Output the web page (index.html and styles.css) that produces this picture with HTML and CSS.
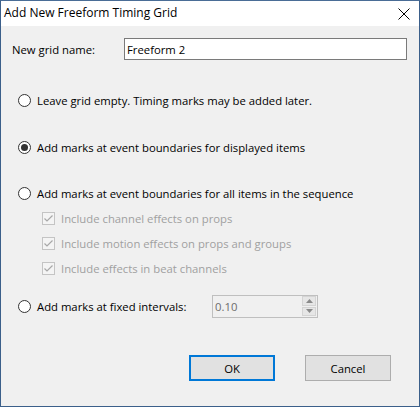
FILE: index.html
```html
<!DOCTYPE html>
<html>
<head>
<meta charset="utf-8">
<link rel="stylesheet" href="styles.css">
</head>
<body>
<div class="dialog">
  <div class="titlebar">
    <span class="title">Add New Freeform Timing Grid</span>
    <svg class="close" width="12" height="12" viewBox="0 0 12 12"><path d="M0.5 0.5 L11.5 11.5 M11.5 0.5 L0.5 11.5" stroke="#000" stroke-width="1" fill="none"/></svg>
  </div>
  <div class="content">
    <div class="row name-row">
      <span class="label">New grid name:</span>
      <div class="textbox">Freeform 2</div>
    </div>
    <div class="row radio-row r1"><span class="radio"></span><span>Leave grid empty. Timing marks may be added later.</span></div>
    <div class="row radio-row r2"><span class="radio checked"></span><span>Add marks at event boundaries for displayed items</span></div>
    <div class="row radio-row r3"><span class="radio"></span><span>Add marks at event boundaries for all items in the sequence</span></div>
    <div class="row check-row c1"><span class="check"><svg width="11" height="11" viewBox="0 0 11 11"><path d="M1.5 5.5 L4 8 L9.5 2.5" stroke="#a8a8a8" stroke-width="1.2" fill="none"/></svg></span><span>Include channel effects on props</span></div>
    <div class="row check-row"><span class="check"><svg width="11" height="11" viewBox="0 0 11 11"><path d="M1.5 5.5 L4 8 L9.5 2.5" stroke="#a8a8a8" stroke-width="1.2" fill="none"/></svg></span><span>Include motion effects on props and groups</span></div>
    <div class="row check-row"><span class="check"><svg width="11" height="11" viewBox="0 0 11 11"><path d="M1.5 5.5 L4 8 L9.5 2.5" stroke="#a8a8a8" stroke-width="1.2" fill="none"/></svg></span><span>Include effects in beat channels</span></div>
    <div class="row radio-row r4">
      <span class="radio"></span><span class="fixed-label">Add marks at fixed intervals:</span>
      <div class="spin">
        <span class="spin-value">0.10</span>
        <div class="spin-btns">
          <div class="spin-btn"><svg width="7" height="4" viewBox="0 0 7 4"><path d="M0 4 L3.5 0 L7 4 Z" fill="#8a8a8a"/></svg></div>
          <div class="spin-btn"><svg width="7" height="4" viewBox="0 0 7 4"><path d="M0 0 L7 0 L3.5 4 Z" fill="#8a8a8a"/></svg></div>
        </div>
      </div>
    </div>
    <div class="buttons">
      <div class="btn default">OK</div>
      <div class="btn">Cancel</div>
    </div>
  </div>
</div>
</body>
</html>
```
FILE: styles.css
```css
html, body {
  margin: 0;
  padding: 0;
  background: #f0f0f0;
}
.dialog {
  box-sizing: border-box;
  width: 420px;
  height: 407px;
  border: 1px solid #3b5f8a;
  border-top-color: #4a6d96;
  background: #f0f0f0;
  font-family: "Segoe UI", "Open Sans", "Noto Sans", sans-serif;
  font-size: 11.3px;
  color: #000;
  display: flex;
  flex-direction: column;
}
.titlebar {
  height: 25px;
  background: #fff;
  display: flex;
  align-items: center;
  justify-content: space-between;
  padding: 0 9px 0 3px;
  flex-shrink: 0;
}
.title {
  font-size: 12px;
  position: relative;
  top: -1px;
}
.close {
  display: block;
  margin-top: 1px;
}
.content {
  display: flex;
  flex-direction: column;
}
.row {
  display: flex;
  align-items: center;
}
.name-row {
  height: 22px;
  margin-top: 12px;
  padding-left: 11px;
}
.label {
  width: 112px;
}
.textbox {
  box-sizing: border-box;
  width: 283px;
  height: 22px;
  border: 1px solid #7a7a7a;
  background: #fff;
  padding-left: 2px;
  display: flex;
  align-items: center;
}
.radio-row {
  height: 20px;
  padding-left: 17px;
}
.r1 { margin-top: 30px; }
.r2 { margin-top: 27px; }
.r3 { margin-top: 26px; }
.radio {
  box-sizing: border-box;
  width: 13px;
  height: 13px;
  border: 1px solid #333;
  border-radius: 50%;
  background: #fff;
  margin-right: 6px;
  position: relative;
  flex-shrink: 0;
}
.radio.checked::after {
  content: "";
  position: absolute;
  left: 2px;
  top: 2px;
  width: 7px;
  height: 7px;
  border-radius: 50%;
  background: #333;
}
.check-row {
  height: 20px;
  padding-left: 41px;
  color: #a0a0a0;
  margin-top: 5px;
}
.check {
  box-sizing: border-box;
  width: 13px;
  height: 13px;
  border: 1px solid #c4c4c4;
  background: #f4f4f4;
  margin-right: 6px;
  display: flex;
  align-items: center;
  justify-content: center;
}
.check svg { display: block; }
.r4 {
  height: 22px;
  margin-top: 17px;
}
.fixed-label {
  width: 175px;
}
.spin {
  box-sizing: border-box;
  width: 106px;
  height: 23px;
  border: 1px solid #bfbfbf;
  background: #f0f0f0;
  display: flex;
  align-items: center;
  justify-content: space-between;
  padding: 1px 1px 1px 2px;
  color: #6d6d6d;
}
.spin-btns {
  display: flex;
  flex-direction: column;
  gap: 1px;
  height: 20px;
}
.spin-btn {
  box-sizing: border-box;
  width: 14px;
  height: 10px;
  background: #e6e6e6;
  border: 1px solid #d4d4d4;
  display: flex;
  align-items: center;
  justify-content: center;
}
.spin-btn svg { display: block; }
.buttons {
  display: flex;
  justify-content: flex-end;
  gap: 30px;
  padding-right: 28px;
  margin-top: 38px;
}
.btn {
  box-sizing: border-box;
  width: 86px;
  height: 26px;
  border: 1px solid #adadad;
  background: #e1e1e1;
  display: flex;
  align-items: center;
  justify-content: center;
}
.btn.default {
  border: 2px solid #0078d7;
}
```
